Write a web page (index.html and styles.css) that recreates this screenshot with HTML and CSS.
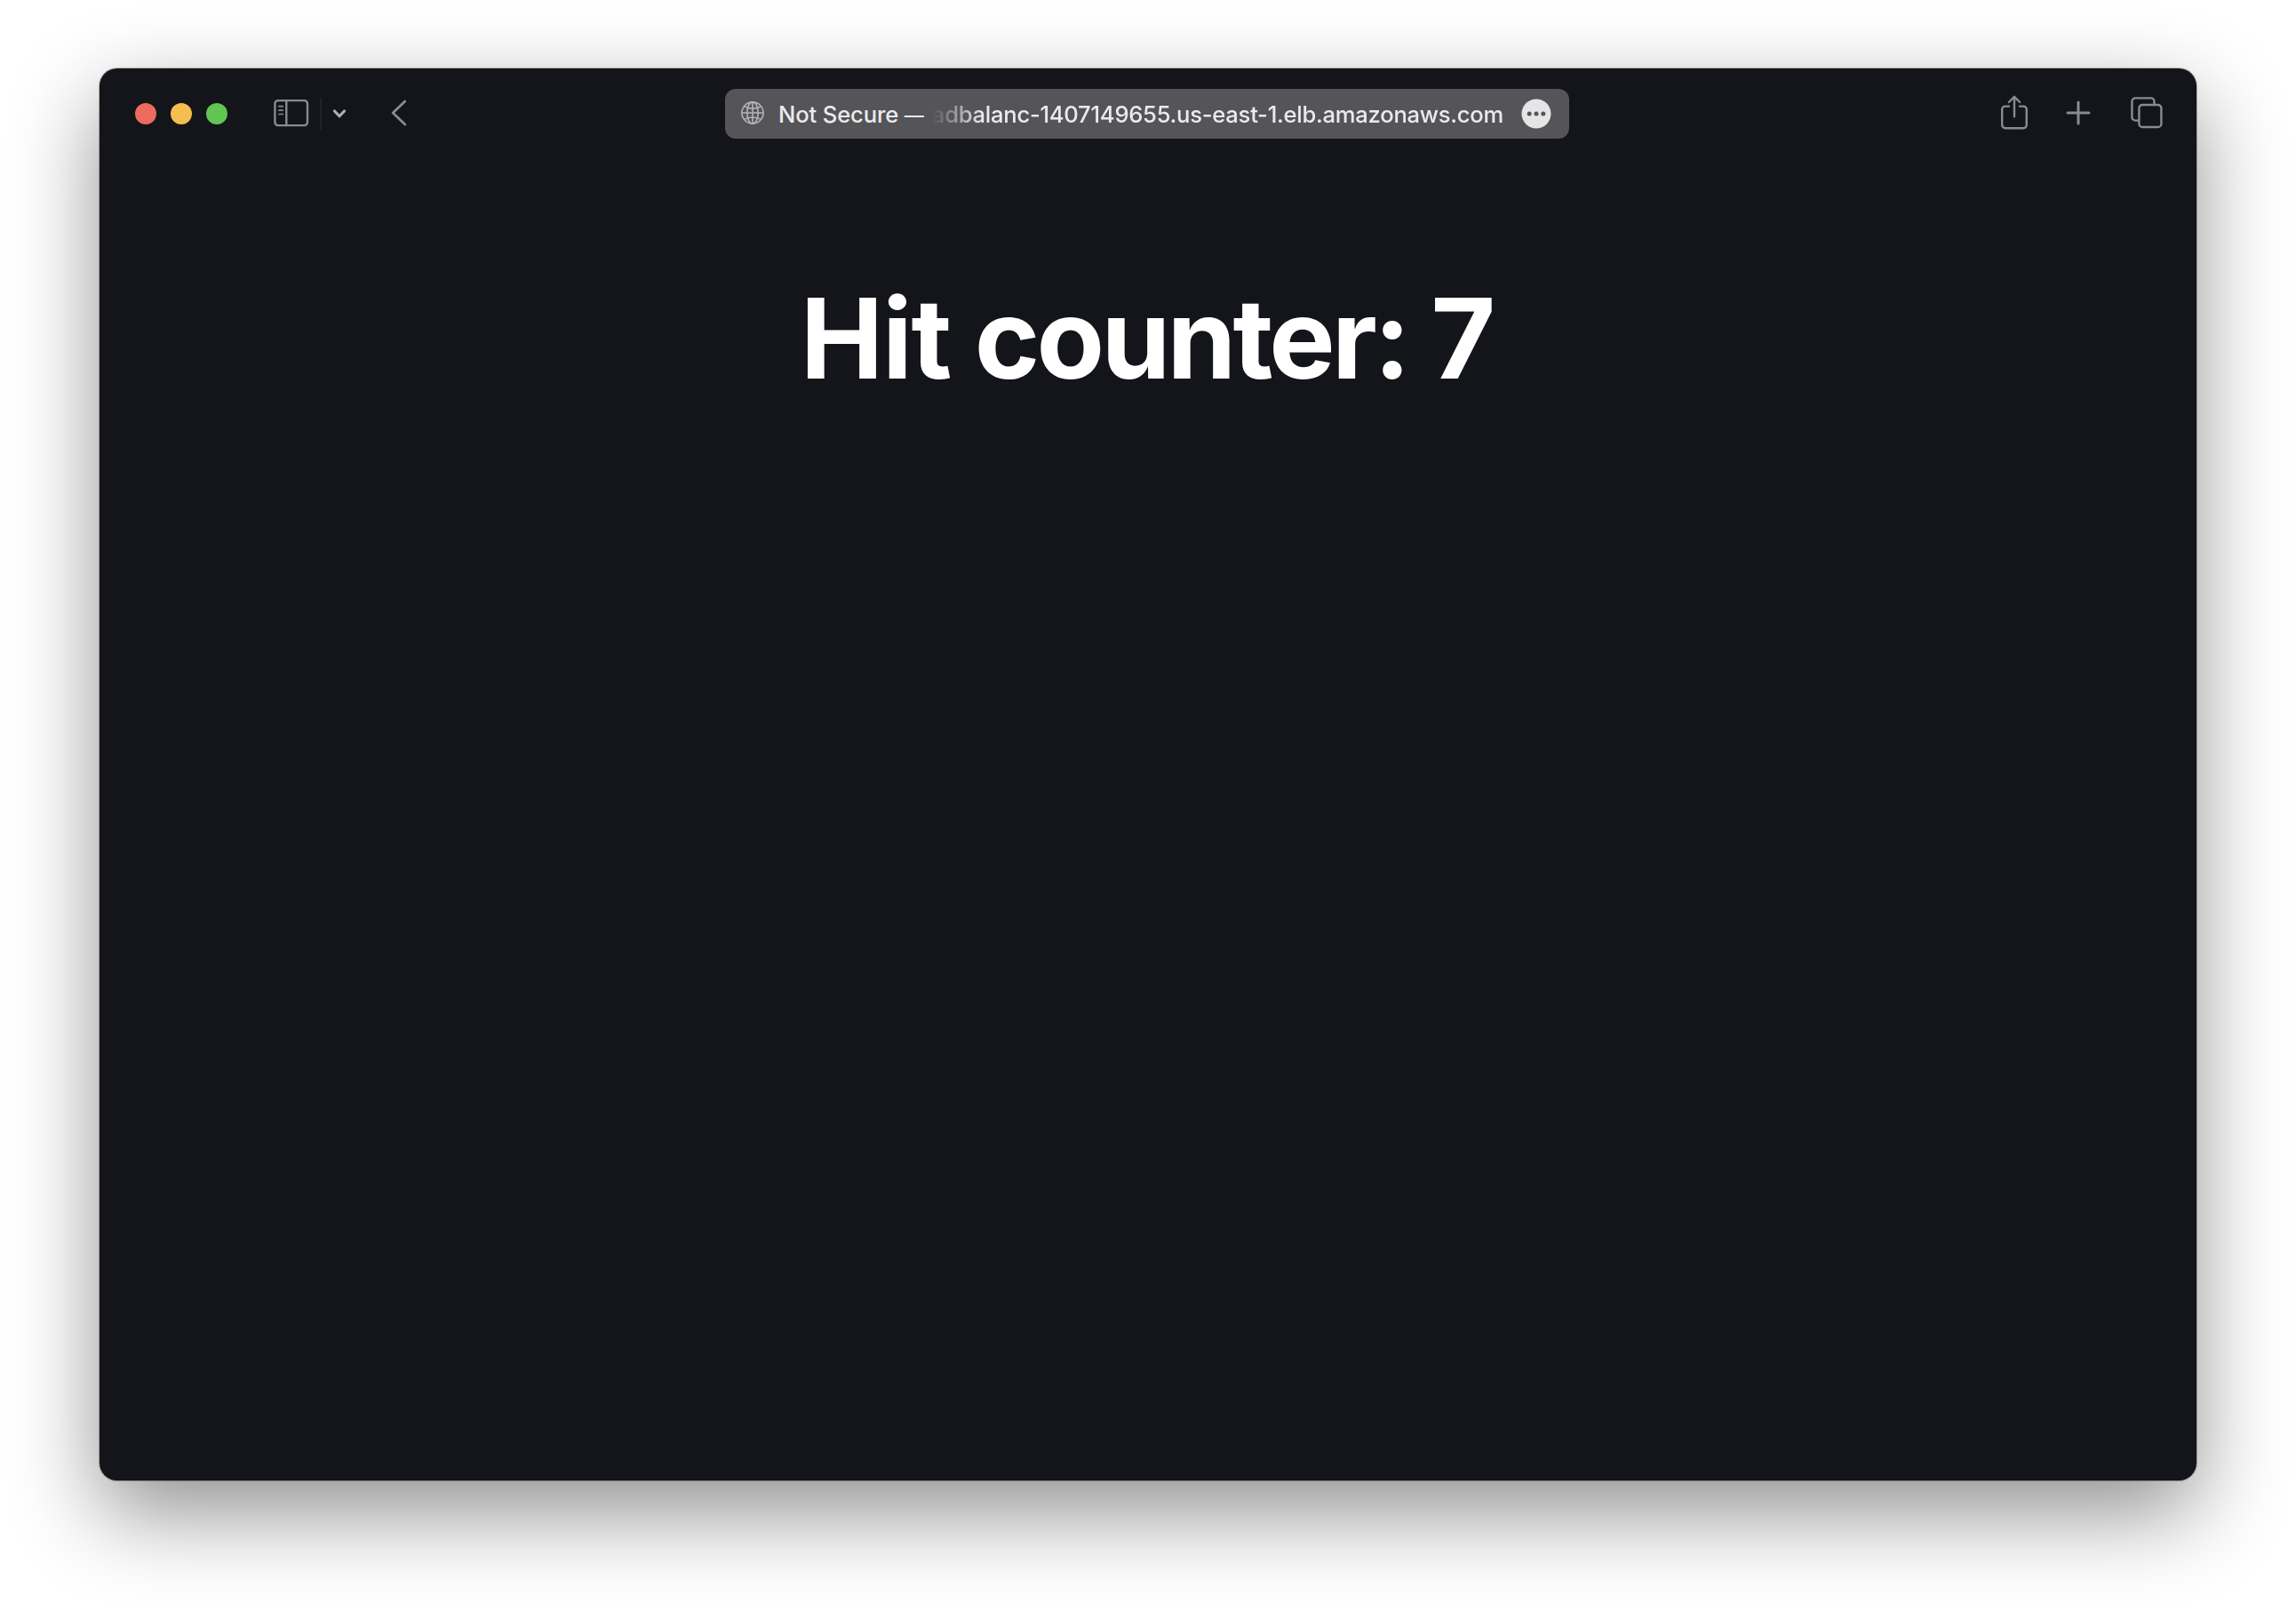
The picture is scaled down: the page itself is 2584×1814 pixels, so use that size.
FILE: index.html
```html
<!DOCTYPE html>
<html lang="en">
<head>
<meta charset="utf-8">
<title>Hit counter</title>
<link rel="stylesheet" href="styles.css">
</head>
<body>
<div class="window">
  <header class="toolbar">
    <div class="toolbar-left">
      <div class="lights"><span class="light close"></span><span class="light minimize"></span><span class="light zoom"></span></div>
      <svg class="icon sidebar" width="40" height="32" viewBox="0 0 40 32" fill="none" stroke="#8a8b8e" stroke-width="2.4" stroke-linecap="round"><rect x="1.4" y="2.1" width="36.6" height="28" rx="3.6"/><path d="M14.3 2.1v28"/><path d="M5.9 8.7h4.4M5.9 13.1h4.4M5.9 17.5h4.4" stroke-width="1.7"/></svg>
      <span class="divider"></span>
      <svg class="icon chevron" width="16" height="12" viewBox="0 0 16 12" fill="none" stroke="#b1b1b2" stroke-width="3" stroke-linecap="round" stroke-linejoin="round"><path d="M2.4 2.9 8 8.8l5.6-5.9"/></svg>
      <svg class="icon back" width="18" height="30" viewBox="0 0 18 30" fill="none" stroke="#8a8b8e" stroke-width="2.8" stroke-linecap="round" stroke-linejoin="round"><path d="M15.8 2 2.2 15l13.6 13"/></svg>
    </div>
    <div class="address">
      <svg class="globe" width="26" height="26" viewBox="0 0 26 26" fill="none" stroke="#b4b4b6" stroke-width="1.6"><circle cx="13" cy="13" r="12.1"/><ellipse cx="13" cy="13" rx="6.2" ry="12.1"/><path d="M13 .9v24.2M.9 13h24.2M3.6 5.6c5 3.3 13.8 3.3 18.8 0M3.6 20.4c5-3.3 13.8-3.3 18.8 0"/></svg>
      <span class="security">Not Secure <span class="dash">—</span></span>
      <span class="host">adbalanc-1407149655.us-east-1.elb.amazonaws.com</span>
      <svg class="more" width="34" height="34" viewBox="0 0 34 34"><circle cx="17" cy="17" r="16.5" fill="#e5e5e5"/><g fill="#545459"><circle cx="9.2" cy="17" r="2.5"/><circle cx="17" cy="17" r="2.5"/><circle cx="24.8" cy="17" r="2.5"/></g></svg>
    </div>
    <div class="toolbar-right">
      <svg class="icon share" width="30" height="40" viewBox="0 0 30 40" fill="none" stroke="#8a8b8e" stroke-width="2.4" stroke-linecap="round" stroke-linejoin="round"><path d="M10 12.6H4.8a3.6 3.6 0 0 0-3.6 3.6v17.4a3.6 3.6 0 0 0 3.6 3.6h20.4a3.6 3.6 0 0 0 3.6-3.6V16.2a3.6 3.6 0 0 0-3.6-3.6H20" stroke-linecap="butt"/><path d="M15 24.2V2.4M8.8 8 15 1.8 21.2 8"/></svg>
      <svg class="icon plus" width="28" height="28" viewBox="0 0 28 28" fill="none" stroke="#8a8b8e" stroke-width="3" stroke-linecap="round"><path d="M14 2v24M2 14h24"/></svg>
      <svg class="icon tabs" width="36" height="36" viewBox="0 0 36 36" fill="none" stroke="#8a8b8e" stroke-width="2.4"><rect x="9.4" y="9" width="25" height="25" rx="3.8"/><path d="M26.5 9V5.2a3.8 3.8 0 0 0-3.8-3.8H5.2a3.8 3.8 0 0 0-3.8 3.8v17.6a3.8 3.8 0 0 0 3.8 3.8h4.2"/></svg>
    </div>
  </header>
  <main class="page"><h1 class="title"><span class="word-hit">Hit</span> <span class="word-counter">counter:</span> 7</h1></main>
</div>
</body>
</html>
```
FILE: styles.css
```css
* { box-sizing: border-box; }

body {
  margin: 0;
  padding: 77px 112px 148px;
  height: 1814px;
  background: #fff;
  font-family: Inter, "Liberation Sans", sans-serif;
  overflow: hidden;
}

.window {
  height: 1589px;
  border-radius: 20px;
  background: #14151a;
  box-shadow: 0 0 1px 1px rgba(0, 0, 0, 0.25), 0 36px 98px rgba(0, 0, 0, 0.44);
}

.toolbar {
  display: grid;
  grid-template-columns: 704px 950px 1fr;
  align-items: center;
  height: 102px;
}

.toolbar-left,
.toolbar-right,
.lights,
.address {
  display: flex;
  align-items: center;
}

.toolbar-left { padding-left: 40px; }
.lights { gap: 16px; }

.light {
  width: 24px;
  height: 24px;
  border-radius: 50%;
}

.close { background: #ed6a5e; }
.minimize { background: #f5bf4f; }
.zoom { background: #61c554; }

.icon,
.globe,
.more { display: block; flex: none; }

.sidebar { margin: 0 12px 2px 52px; }
.divider { width: 2px; height: 36px; background: #222328; }
.chevron { margin-left: 12px; }
.back { margin: 0 0 2px 50px; }

.address {
  height: 56px;
  padding: 0 20px 0 18px;
  border-radius: 12px;
  background: #545459;
  color: #ebebeb;
  font-size: 25.6px;
  font-weight: 500;
  letter-spacing: -0.26px;
  line-height: 56px;
  white-space: nowrap;
}

.globe { margin-bottom: 2px; }
.security { margin-left: 16px; padding-top: 2px; letter-spacing: -0.15px; }
.dash { font-size: 22px; }

.host {
  margin-left: auto;
  padding-top: 2px;
  -webkit-mask-image: linear-gradient(90deg, transparent 0, #000 56px);
  mask-image: linear-gradient(90deg, transparent 0, #000 56px);
}

.more { margin-left: 20px; }

.toolbar-right { justify-content: flex-end; padding: 0 38px 3px 0; }
.plus { margin-left: 43px; }
.tabs { margin-left: 45px; }

.page { padding-top: 126px; }

.title {
  margin: 0;
  padding-right: 3px;
  color: #fff;
  font-size: 125px;
  font-weight: 700;
  line-height: 152px;
  letter-spacing: -3px;
  text-align: center;
  white-space: nowrap;
}

.word-hit { letter-spacing: -1.2px; }
.word-counter { letter-spacing: -3.8px; }
```
